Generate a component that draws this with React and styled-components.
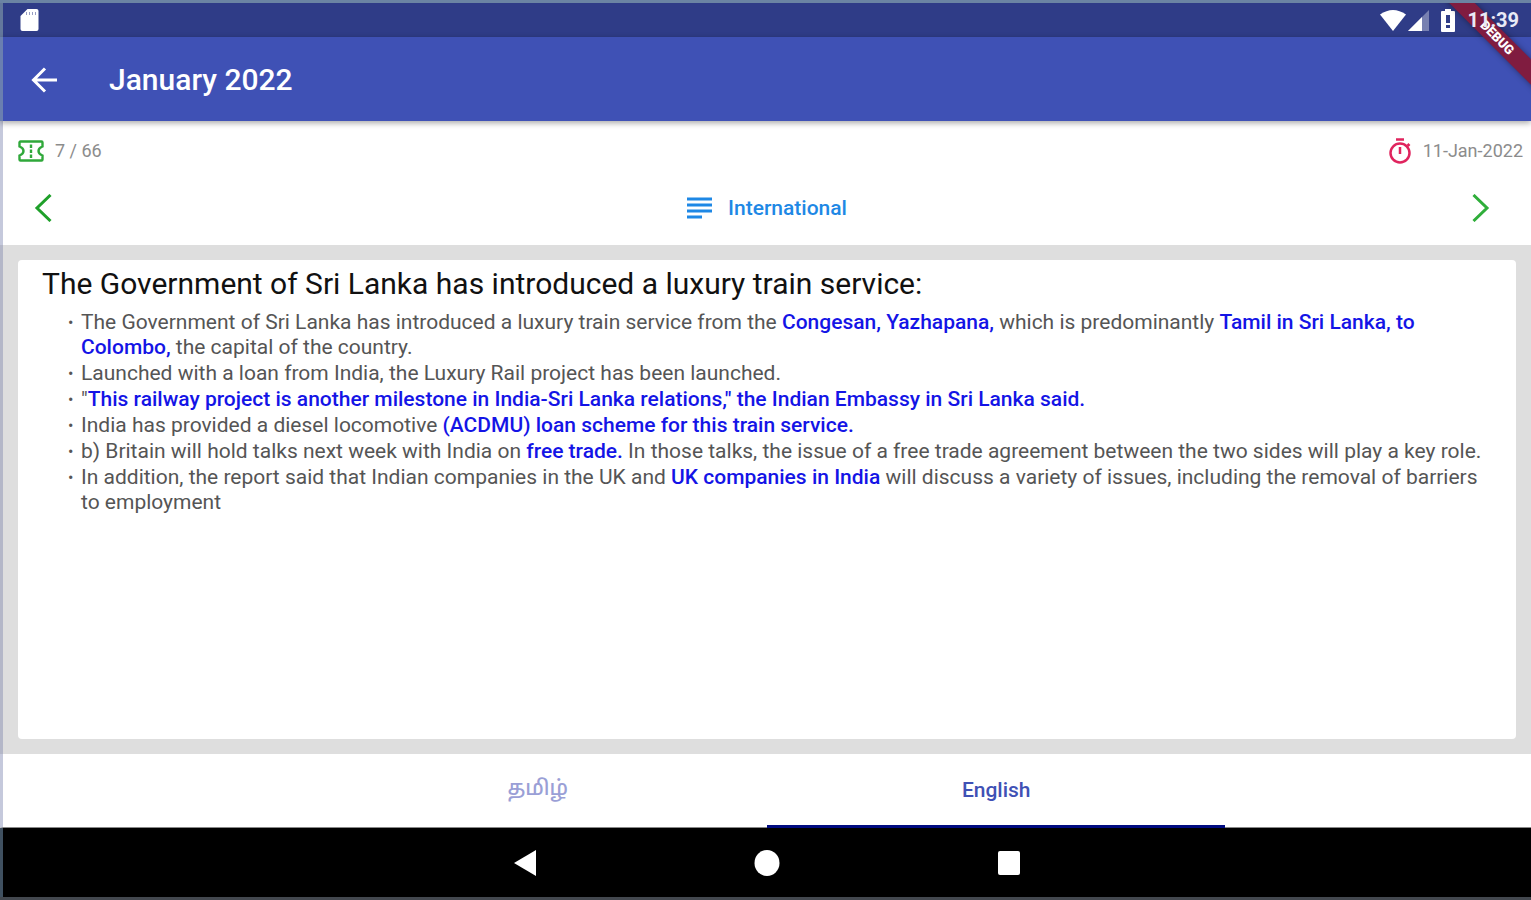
import styled, { createGlobalStyle } from "styled-components";

export default function App(){
    return(
        <Screen>
            <GlobalStyle />
            <StatusBar>
                <svg width="19" height="22" viewBox="0 0 18 22" fill="#fff">
                    <path d="M7 0H16a2 2 0 0 1 2 2V20a2 2 0 0 1-2 2H2a2 2 0 0 1-2-2V7Z" />
                    <path d="M6 3v3M9 3v3M12 3v3M15 3v3" stroke="#2f3c87" strokeWidth="1" strokeOpacity="0.5" />
                </svg>
                <StatusIcons>
                    <svg width="26" height="21" viewBox="0 0 26 21" fill="#fff">
                        <path d="M0 4.500Q13-4.500 26 4.500L13 21Z" />
                    </svg>
                    <svg width="21" height="21" viewBox="0 0 21 21" fill="#fff">
                        <path d="M21 0V21H0Z" opacity="0.35" />
                        <path d="M14 7V21H0Z" />
                    </svg>
                    <Battery width="14" height="23" viewBox="0 0 14 23">
                        <path fill="#fff" d="M4 0h6v2h3a1 1 0 0 1 1 1v19a1 1 0 0 1-1 1H1a1 1 0 0 1-1-1V3a1 1 0 0 1 1-1h3Z" />
                        <path fill="#2f3c87" d="M5 6h4v8H5ZM5 16h4v3H5Z" />
                    </Battery>
                    <Clock>11:39</Clock>
                </StatusIcons>
            </StatusBar>
            <AppBar>
                <IconButton aria-label="Back">
                    <svg width="26" height="26" viewBox="0 0 26 26" fill="none" stroke="#fff" strokeWidth="3">
                        <path d="M26 13H2M14 1.500L2.500 13L14 24.500" />
                    </svg>
                </IconButton>
                <h1>January 2022</h1>
            </AppBar>
            <Ribbon><span>DEBUG</span></Ribbon>
            <MetaRow>
                <Meta>
                    <svg width="26" height="22" viewBox="0 0 26 22" fill="none" stroke="#2fa83a" strokeWidth="2.400">
                        <path d="M2.500 1.500H23.500a1 1 0 0 1 1 1V6.500Q20.500 8 20.500 11T24.500 15.500V19.500a1 1 0 0 1-1 1H2.500a1 1 0 0 1-1-1V15.500Q5.500 14 5.500 11T1.500 6.500V2.500a1 1 0 0 1 1-1Z" />
                        <path d="M13 4.500v3.500M13 9.500v3.500M13 14.500v3.500" />
                    </svg>
                    7 / 66
                </Meta>
                <Meta>
                    <svg width="24" height="26" viewBox="0 0 24 26" fill="none" stroke="#e0245e" strokeWidth="2.500">
                        <circle cx="12" cy="15" r="9.500" />
                        <path d="M8 1.500h8M12 9v7M19.500 6l2 2" />
                    </svg>
                    11-Jan-2022
                </Meta>
            </MetaRow>
            <CategoryRow>
                <IconButton aria-label="Previous">
                    <svg width="18" height="28" viewBox="0 0 18 28" fill="none" stroke="#1fa02a" strokeWidth="3">
                        <path d="M16.500 1L3 14L16.500 27" />
                    </svg>
                </IconButton>
                <Category>
                    <svg width="25" height="22" viewBox="0 0 25 22" stroke="#1e88e5" strokeWidth="2.800">
                        <path d="M0 2h25M0 8h25M0 14h25M0 20h15" />
                    </svg>
                    International
                </Category>
                <IconButton aria-label="Next">
                    <svg width="18" height="28" viewBox="0 0 18 28" fill="none" stroke="#2fae3a" strokeWidth="3">
                        <path d="M1.500 1L15 14L1.500 27" />
                    </svg>
                </IconButton>
            </CategoryRow>
            <Content>
                <Card>
                    <h2>The Government of Sri Lanka has introduced a luxury train service:</h2>
                    <List>
                        <li>The Government of Sri Lanka has introduced a luxury train service from the <b>Congesan, Yazhapana,</b> which is predominantly <b>Tamil in Sri Lanka, to Colombo,</b> the capital of the country.</li>
                        <li>Launched with a loan from India, the Luxury Rail project has been launched.</li>
                        <li>"<b>This railway project is another milestone in India-Sri Lanka relations," the Indian Embassy in Sri Lanka said.</b></li>
                        <li>India has provided a diesel locomotive <b>(ACDMU) loan scheme for this train service.</b></li>
                        <li>b) Britain will hold talks next week with India on <b>free trade.</b> In those talks, the issue of a free trade agreement between the two sides will play a key role.</li>
                        <li>In addition, the report said that Indian companies in the UK and <b>UK companies in India</b> will discuss a variety of issues, including the removal of barriers to employment</li>
                    </List>
                </Card>
            </Content>
            <TabBar>
                <Tabs role="tablist">
                    <Tab role="tab" aria-selected={false} lang="ta">தமிழ்</Tab>
                    <Tab role="tab" aria-selected={true} $active>English</Tab>
                </Tabs>
            </TabBar>
            <NavBar>
                <IconButton aria-label="System back">
                    <svg width="24" height="28" viewBox="0 0 24 28" fill="#fff">
                        <path d="M23 1V27L1 14Z" />
                    </svg>
                </IconButton>
                <IconButton aria-label="Home">
                    <svg width="26" height="26" viewBox="0 0 26 26" fill="#fff">
                        <ellipse cx="13" cy="13" rx="12.500" ry="13" />
                    </svg>
                </IconButton>
                <IconButton aria-label="Recent apps">
                    <svg width="24" height="24" viewBox="0 0 24 24" fill="#fff">
                        <rect x="1" width="22" height="24" rx="2" />
                    </svg>
                </IconButton>
            </NavBar>
        </Screen>
    )
}

const GlobalStyle = createGlobalStyle`
    *{
        box-sizing: border-box;
    }

    body{
        margin: 0;
        font-family: Roboto, "Liberation Sans", sans-serif;
    }

    h1, h2, ul{
        margin: 0;
        padding: 0;
    }
`

const Screen = styled.main`
    position: relative;
    display: flex;
    flex-direction: column;
    min-height: 100vh;
    overflow: hidden;
    border-top: 3px solid #6b84a3;
    border-bottom: 3px solid #43484f;
    background-color: #fff;
`

const IconButton = styled.button`
    display: flex;
    align-items: center;
    justify-content: center;
    padding: 0;
    border: none;
    background: none;
    cursor: pointer;
`

const StatusBar = styled.header`
    display: flex;
    align-items: center;
    justify-content: space-between;
    height: 34px;
    padding: 0 12px 0 17px;
    border-left: 3px solid #64789c;
    background-color: #2f3c87;
`

const StatusIcons = styled.div`
    display: flex;
    align-items: center;
    gap: 2px;
`

const Battery = styled.svg`
    margin: 0 10px;
`

const Clock = styled.time`
    z-index: 2;
    color: #e8eaf6;
    font-size: 20px;
    font-weight: 700;
    line-height: 34px;
`

const AppBar = styled.header`
    z-index: 1;
    display: flex;
    align-items: center;
    gap: 52px;
    height: 84px;
    padding: 2px 28px 0;
    border-left: 3px solid #6a7fb0;
    background-color: #3f51b5;
    box-shadow: 0 2px 6px rgba(0, 0, 0, 0.35);

    h1{
        color: #fff;
        font-size: 30px;
        font-weight: 500;
        line-height: 36px;
    }
`

// corner banner, laid over the status bar and the app bar
const Ribbon = styled.div`
    position: absolute;
    z-index: 1;
    top: 26px;
    right: -36px;
    width: 140px;
    background-color: #801c40;
    color: #fff;
    font-size: 13px;
    font-weight: 900;
    line-height: 18px;
    text-align: center;
    transform: rotate(45deg);
    box-shadow: 0 0 6px rgba(0, 0, 0, 0.4);
`

const MetaRow = styled.div`
    display: flex;
    align-items: center;
    justify-content: space-between;
    height: 60px;
    padding: 0 8px 0 15px;
    border-left: 3px solid #c5c9dc;
`

const Meta = styled.div`
    display: flex;
    align-items: center;
    gap: 11px;
    color: #8c8c8c;
    font-size: 18px;
    line-height: 24px;
`

const CategoryRow = styled.div`
    display: flex;
    align-items: center;
    justify-content: space-between;
    height: 64px;
    padding: 0 41px 10px 31px;
    border-left: 3px solid #c5c9dc;
`

const Category = styled.div`
    display: flex;
    align-items: center;
    gap: 16px;
    padding-left: 10px;
    color: #1e88e5;
    font-size: 21px;
    font-weight: 500;
    line-height: 26px;
`

const Content = styled.section`
    display: flex;
    flex: 1;
    padding: 15px;
    border-left: 3px solid #b4b7c8;
    background-color: #dedede;
`

const Card = styled.article`
    flex: 1;
    padding: 6px 24px;
    border-radius: 4px;
    background-color: #fff;

    h2{
        color: #111;
        font-size: 30px;
        font-weight: 400;
        line-height: 36px;
    }
`

const List = styled.ul`
    display: flex;
    flex-direction: column;
    gap: 1px;
    padding: 8px 0 0 39px;
    list-style: none;
    color: #555;
    font-size: 21px;
    line-height: 25px;

    li{
        position: relative;
    }

    li::before{
        content: "•";
        position: absolute;
        left: -13px;
        font-size: 16px;
    }

    b{
        color: #1414e6;
        font-weight: 500;
    }
`

const TabBar = styled.div`
    display: flex;
    justify-content: center;
    height: 74px;
    border-left: 3px solid #c5c9dc;
    border-bottom: 1px solid #888;
`

const Tabs = styled.div`
    display: flex;
    width: 60%;
    margin-bottom: -1px;
`

const Tab = styled.button`
    flex: 1;
    padding: 0;
    border: none;
    border-bottom: 3px solid ${(props) => (props.$active ? "#000b80" : "transparent")};
    background: none;
    color: ${(props) => (props.$active ? "#3f51b5" : "#9a9fd6")};
    font-family: Roboto, "Noto Sans Tamil", "Noto Sans", sans-serif;
    font-size: 21px;
    font-weight: 500;
    cursor: pointer;
`

const NavBar = styled.nav`
    display: flex;
    align-items: center;
    justify-content: center;
    gap: 217px;
    height: 69px;
    border-left: 3px solid #3f5060;
    background-color: #000;
`
